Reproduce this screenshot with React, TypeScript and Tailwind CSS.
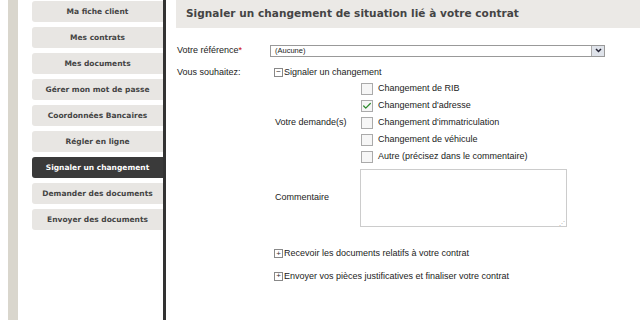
import { Check } from "lucide-react";

const menu = [
	"Ma fiche client",
	"Mes contrats",
	"Mes documents",
	"Gérer mon mot de passe",
	"Coordonnées Bancaires",
	"Régler en ligne",
	"Signaler un changement",
	"Demander des documents",
	"Envoyer des documents",
];

const choices = [
	{ label: "Changement de RIB", checked: false },
	{ label: "Changement d'adresse", checked: true },
	{ label: "Changement d'immatriculation", checked: false },
	{ label: "Changement de véhicule", checked: false },
	{ label: "Autre (précisez dans le commentaire)", checked: false },
];

function Toggle({ open }: { open: boolean }) {
	return (
		<span className="w-[9px] h-[9px] border border-[#888] bg-white flex items-center justify-center text-[8px] leading-none text-[#333] mr-[1px]">
			{open ? "−" : "+"}
		</span>
	);
}

export default function App() {
	return (
		<div className="w-[640px] h-[320px] bg-white flex overflow-hidden" style={{ fontFamily: "'Liberation Sans', Arial, sans-serif" }}>
			<div className="w-[8px]" />
			<div className="w-[10px] bg-[#d9d6cd]" />
			<div className="w-[14px]" />
			<nav className="w-[131px] flex flex-col gap-[5px] mt-[1px]" style={{ fontFamily: "'DejaVu Sans', sans-serif" }}>
				{menu.map((m) => {
					const active = m === "Signaler un changement";
					return (
						<div
							key={m}
							className={`h-[21px] flex items-center justify-center rounded-l-[3px] text-[7.5px] font-bold ${
								active ? "bg-[#3a3a3a] text-white" : "bg-[#e8e6e3] text-[#444]"
							}`}
						>
							{m}
						</div>
					);
				})}
			</nav>
			<div className="w-[3px] bg-[#333]" />
			<div className="w-[10px]" />
			<main className="flex-1 flex flex-col text-[9px] text-[#222]">
				<div className="h-[28px] bg-[#ebe9e6] flex items-center pl-[10px] text-[10.5px] font-bold text-[#444] tracking-[0.05px]" style={{ fontFamily: "'DejaVu Sans', sans-serif" }}>
					Signaler un changement de situation lié à votre contrat
				</div>
				<div className="flex items-center mt-[16px] ml-[1px]">
					<span className="w-[93px]">
						Votre référence<span className="text-[#c00]">*</span>
					</span>
					<div className="w-[335px] h-[12px] border border-[#999] flex items-center justify-between pl-[4px] text-[7.5px]">
						(Aucune)
						<span className="w-[13px] h-[10px] bg-[#dfe3ea] border-l border-[#aaa] flex items-center justify-center">
							<svg width="7" height="5" viewBox="0 0 7 5"><path d="M1 1l2.5 2.5L6 1" stroke="#223" strokeWidth="1.5" fill="none" /></svg>
						</span>
					</div>
				</div>
				<div className="flex items-center mt-[8px] ml-[1px]">
					<span className="w-[97px]">Vous souhaitez:</span>
					<Toggle open />
					<span>Signaler un changement</span>
				</div>
				<div className="flex ml-[99px] mt-[3px]">
					<div className="w-[86px] flex items-center">Votre demande(s)</div>
					<div className="flex flex-col gap-[4px]">
						{choices.map((c) => (
							<div key={c.label} className="flex items-center h-[13px]">
								<span className="w-[12px] h-[12px] border border-[#aaa] bg-[#f6f6f6] mr-[5px] flex items-center justify-center">
									{c.checked && <Check size={10} strokeWidth={3} className="text-[#2e8b2e]" />}
								</span>
								{c.label}
							</div>
						))}
					</div>
				</div>
				<div className="flex ml-[99px] mt-[6px]">
					<div className="w-[85px] flex items-center">Commentaire</div>
					<div className="w-[207px] h-[58px] border border-[#ccc] relative">
						<span className="absolute right-[1px] bottom-[0px] text-[6px] text-[#aaa] leading-none">⋰</span>
					</div>
				</div>
				<div className="flex items-center ml-[98px] mt-[20px]">
					<Toggle open={false} />
					<span>Recevoir les documents relatifs à votre contrat</span>
				</div>
				<div className="flex items-center ml-[98px] mt-[9px]">
					<Toggle open={false} />
					<span>Envoyer vos pièces justificatives et finaliser votre contrat</span>
				</div>
			</main>
		</div>
	);
}
